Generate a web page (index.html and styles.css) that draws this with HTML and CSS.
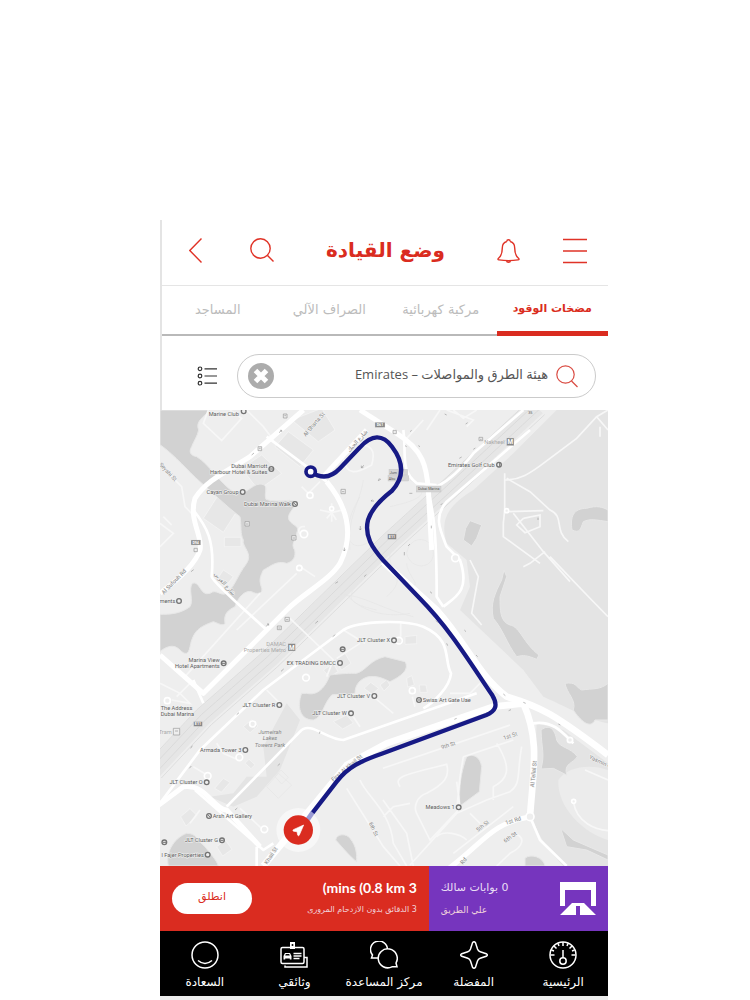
FILE: index.html
```html
<!DOCTYPE html>
<html lang="ar" dir="rtl">
<head>
<meta charset="utf-8">
<meta name="viewport" content="width=device-width, initial-scale=1">
<title>وضع القيادة</title>
<link rel="stylesheet" href="styles.css">
</head>
<body>
<div class="app">
  <div class="top">
    <header class="header">
      <div class="actions actions-start">
        <button class="icon-button" aria-label="القائمة"><svg width="24" height="26" viewBox="0 0 24 26"><path d="M0 1.5h24M0 13h24M0 24.5h24"/></svg></button>
        <button class="icon-button" aria-label="التنبيهات"><svg width="23" height="26" viewBox="0 0 23 26"><path d="M9.8 3.5C6.800 4.200 5.300 6.800 5.300 10C5.300 16 4 18.300 1.500 20.300C.6 21.100.8 21.700 2 21.900C8 22.800 15 22.800 21 21.900C22.200 21.700 22.400 21.100 21.500 20.300C19 18.300 17.700 16 17.700 10C17.700 6.800 16.200 4.200 13.200 3.500M9.800 3.500a1.700 1.700 0 1 1 3.400 0M9.300 22.800a2.300 2 0 0 0 4.400 0"/></svg></button>
      </div>
      <h1 class="title">وضع القيادة</h1>
      <div class="actions actions-end">
        <button class="icon-button" aria-label="بحث"><svg width="24" height="25" viewBox="0 0 24 25"><circle cx="10.500" cy="10.500" r="9.700"/><path d="M17.500 17.500l6 6"/></svg></button>
        <button class="icon-button" aria-label="رجوع"><svg width="13" height="25" viewBox="0 0 13 25"><path d="M12.500.5L.8 12.500l11.700 12"/></svg></button>
      </div>
    </header>
    <nav class="tabs">
      <button class="tab tab-active">مضخات الوقود</button>
      <button class="tab">مركبة كهربائية</button>
      <button class="tab">الصراف الآلي</button>
      <button class="tab">المساجد</button>
    </nav>
    <form class="search">
      <div class="field">
        <svg class="field-icon" width="22" height="23" viewBox="0 0 22 23"><circle cx="9.500" cy="9.500" r="8.700"/><path d="M15.500 16l6 6"/></svg>
        <input class="field-input" type="text" aria-label="بحث عن موقع" value="هيئة الطرق والمواصلات – Emirates">
        <button class="clear" type="button" aria-label="مسح"><svg width="26" height="26" viewBox="0 0 26 26"><circle cx="13" cy="13" r="13"/><path d="M7.500 7.500l11 11M18.500 7.500l-11 11"/></svg></button>
      </div>
      <button class="list" type="button" aria-label="عرض القائمة"><svg width="20" height="20" viewBox="0 0 20 20"><g><circle cx="3" cy="2.800" r="1.800"/><circle cx="3" cy="10" r="1.800"/><circle cx="3" cy="17.200" r="1.800"/></g><path d="M7.500 2.800H20M7.500 10H20M7.500 17.200H20"/></svg></button>
    </form>
  </div>

  <main class="map">
    <svg class="map-canvas" viewBox="0 0 1344 1368" preserveAspectRatio="xMidYMid slice" direction="ltr" role="img" aria-label="خريطة المسار">
      <rect width="1344" height="1368" fill="#eee"/>
      <g class="park">
        <path d="M1190 0H1344V940C1290 930 1240 900 1150 860L1090 780L900 600L930 530L920 450L860 400C840 330 860 290 940 240L1060 130Z"/>
        <path d="M1130 940L1210 960L1344 1060V1368H1210C1150 1300 1110 1250 1115 1170C1135 1080 1125 1010 1130 940Z"/>
        <path d="M150 1160L220 1150L260 1100L320 1100L310 1010L380 880L420 930L400 980L360 1080L290 1160L220 1190Z"/>
      </g>
      <g class="golf">
        <path d="M1195 1110C1220 1070 1290 1060 1344 1080V1290C1270 1270 1190 1190 1195 1110Z"/>
      </g>
      <g class="blocks">
        <path d="M345 110l40-45l75 55l-40 50zM395 30l90-35l40 65l-50 35zM245 175l60-40l60 55l-70 50zM175 255l60 42l-45 70l-60-42zM193 382h50v28h-50z"/>
        <path d="M190 480l30 20l-20 25l-28-18zM525 750l30-20l18 30l-28 20zM490 780l30-20l14 25l-26 16zM612 835l20-18l24 18l-20 18zM660 825l20-16l10 16l-18 18zM520 935l40-20l20 24l-32 18zM250 950l24-20l20 18l-24 20zM190 1105l20 12l-26 30l-20-12zM255 1060l12-12l18 16l-12 12zM62 1220l28-24l22 22l-34 30zM170 1310l26-20l20 28l-28 20zM735 680l35-4v25l-35 2zM740 805l15-8l8 28l-20 6zM778 825h20l4 22h-22z"/>
      </g>
      <g class="water">
        <path d="M0 0H150C130 22 105 34 116 60C112 80 100 95 95 110C86 124 90 137 110 140C145 160 180 220 220 245C260 260 270 225 300 222C330 224 310 245 318 268C350 280 380 265 412 275C400 300 380 310 387 330C400 350 420 345 410 370C410 390 390 400 404 420C408 440 400 455 380 460C350 450 330 470 310 480C295 510 300 515 305 535C310 550 290 555 275 545C255 540 235 560 225 590C205 600 190 610 195 640C190 650 175 640 160 635C120 650 100 660 90 710C85 735 75 735 60 720C40 700 20 710 0 724V613C30 613 60 612 90 590C102 570 84 540 97 520C120 510 120 560 150 550C170 535 180 560 200 550C225 530 230 500 260 460C280 430 245 410 250 390C240 370 245 350 240 320C200 290 160 250 120 215C80 180 50 140 0 104Z"/>
        <path d="M440 850C480 860 500 820 510 795C550 790 570 790 590 790C620 780 630 750 675 740L735 755C750 780 720 800 690 815C650 795 640 800 625 800C590 810 585 835 585 850C550 860 530 850 515 855C485 890 490 920 460 930C420 930 410 890 425 850Z"/>
        <path d="M25 1368C15 1320 50 1280 80 1270C110 1270 110 1290 135 1310C150 1330 170 1350 175 1368Z"/>
        <path d="M930 332L965 345L950 385L935 408L910 390L917 355ZM1236 360C1230 320 1240 295 1280 295C1310 285 1330 292 1344 300V335C1310 330 1290 325 1270 335C1260 360 1260 370 1236 360Z"/>
        <path d="M1032 480L1040 500L1020 560C1020 600 1020 635 1050 645C1080 650 1090 700 1137 735L1130 748C1100 735 1090 735 1070 740C1040 700 1030 660 1000 625C990 580 1005 550 1025 510Z"/>
        <path d="M1215 820C1250 815 1245 830 1265 840C1300 835 1320 840 1344 820V930H1305C1290 960 1260 930 1240 900C1250 870 1220 850 1215 820Z"/>
        <path d="M920 1040C940 1030 960 1040 965 1070L958 1145L900 1188C895 1130 905 1080 920 1040ZM1143 960C1170 940 1185 960 1190 990C1200 1015 1230 1010 1252 1040C1240 1060 1210 1060 1220 1095L1180 1075L1143 1077C1155 1030 1145 1020 1143 960Z"/>
        <path d="M1202 1255L1240 1290L1344 1335V1350L1280 1320L1220 1310ZM1095 1345C1110 1330 1150 1340 1155 1368H1095ZM527 1290C530 1270 560 1270 570 1285C590 1310 590 1330 590 1355C570 1340 550 1315 527 1290Z"/>
      </g>
      <g class="rail">
        <path d="M-20 1080L130 920L330 745L520 560L695 390L860 240L1130 -10"/>
        <g class="rail-line">
          <path d="M-40 1060L110 900L310 725L500 540L675 370L840 220L1110 -30"/>
          <path d="M-26 1074L124 914L324 739L514 554L689 384L854 234L1124 -16"/>
          <path d="M-12 1088L138 928L338 753L528 568L703 398L868 248L1138 -2"/>
          <path d="M4 1104L154 944L354 769L544 584L719 414L884 264L1154 14"/>
        </g>
      </g>
      <g class="minor">
        <path d="M145 0L130 40L185 92L245 25L210 0M260 0L310 50L340 90M0 165L65 230L75 290L95 310M0 340L40 370L0 410M35 345L10 320M435 370C410 380 410 345 435 350M445 250L480 215M425 230L460 265M550 145C560 200 590 190 635 165C645 130 640 110 610 105M480 300l35 8l40-10M515 280v55M500 325l15-17l14 22M465 500L420 470M410 490L230 660M300 550L75 800M390 625L520 750L500 800M0 820L60 850L90 880L35 870M50 860L90 820M320 840L360 880M550 660L615 700M530 745L600 700M722 640V680M170 1000L190 1030L235 1050M100 1070L150 1100M240 1195L310 1260M90 1240L120 1200M740 85L790 30M860 0L940 30L920 50M880 0L910 25L950 0M800 60L840 0M1034 190V300L1030 340V380L1140 460M1060 310L1150 425L1230 515M1035 210C1080 210 1110 190 1150 160L1250 85L1310 20L1344 0M1040 205L1110 245L1170 300C1215 320 1180 360 1225 395M1040 305L1150 302M1090 325L1140 315V350L1095 368L1070 345L1090 325M1310 20L1344 60M1320 50V80M1090 470L1110 460L1155 425M1170 440L1295 570L1344 620M930 450L955 500L935 610L965 645M870 850H930L960 820M757 860L765 890M640 860L700 910M580 920L600 950"/>
        <path d="M669 1075L1050 945M720 1130C700 1100 730 1095 860 1063C870 1100 855 1120 800 1150C770 1160 760 1190 770 1210L810 1290L900 1195L890 1115M750 1180L700 1190L670 1220M750 1365L890 1210L980 1170L1050 1145C1085 1120 1070 1090 1085 1010M910 1040L900 1100L890 1200M910 1040L1060 990M1010 1000C1060 1080 1040 1110 1000 1130L1000 1170M930 1210L960 1240M830 1280C850 1260 900 1270 920 1290M880 1330L1060 1190M1060 1270C1100 1280 1090 1310 1050 1330L1010 1368M600 1110C620 1160 690 1200 700 1300L740 1368M560 1135L670 1310L720 1368M669 1170L740 1270L760 1368M1240 1175C1250 1240 1310 1260 1344 1262M1275 1080L1344 1110"/>
      </g>
      <g class="ramp">
        <path d="M610 210C600 280 560 320 570 420M620 400C560 430 540 360 600 260M540 530C600 620 700 620 750 610M640 480C540 560 560 580 650 600M680 560C750 500 680 480 690 430M690 290C780 270 820 250 750 210M740 430C750 370 820 380 820 430S750 480 740 430M520 560C590 540 640 590 760 620M700 500C820 560 740 500 740 460M320 1130l35-40l40 35l-40 40zM345 1100l18-20l22 22l-20 20z"/>
      </g>
      <g class="road">
        <path d="M100 300C140 350 165 390 155 500C160 520 300 640 320 660M130 880L100 810"/>
        <path d="M320 80L500 215M105 1140L310 1320L340 1300M290 1310V1368"/>
        <path d="M0 1180L120 1020L310 840L550 660C600 630 740 630 790 650C880 690 850 750 873 790C870 830 820 880 790 895M200 1190L420 965C450 930 500 990 550 990L950 850"/>
        <path d="M1090 0L940 130C900 180 870 210 830 230M730 60C740 140 720 180 770 220L830 225"/>
        <path d="M1110 60L860 275C820 320 840 360 860 410L900 450C930 540 890 560 850 590M800 220C820 300 830 360 830 560L850 590"/>
      </g>
      <g class="avenue">
        <path d="M430 0L270 140C200 185 140 210 105 265C85 330 130 380 120 420C110 450 80 490 0 550"/>
        <path d="M500 215C570 300 580 380 540 460C510 510 430 550 380 600L130 850L0 735"/>
        <path d="M600 0L710 70C790 120 800 170 805 240L815 420M490 200L620 60"/>
        <path d="M-10 1190L70 1130C140 1120 160 1200 200 1200L300 1310"/>
        <path d="M1110 1220C990 1240 970 1300 860 1380"/>
      </g>
      <g class="highway">
        <path d="M669 455L830 600C920 700 950 790 1040 860C1140 890 1180 910 1344 1035"/>
        <path d="M310 1368L470 1175L560 1065L680 1000L1000 890L1090 880C1140 990 1120 1080 1110 1220"/>
      </g>
      <path class="road" d="M1110 1220L1140 1290L1220 1368M1120 940C1180 930 1210 970 1240 1000"/>
      <g class="circles">
        <circle cx="450" cy="256" r="9"/><circle cx="432" cy="372" r="11"/><circle cx="418" cy="474" r="8"/><circle cx="515" cy="296" r="6"/><circle cx="438" cy="803" r="10"/><circle cx="278" cy="942" r="9"/><circle cx="238" cy="1042" r="10"/><circle cx="313" cy="1258" r="10"/><circle cx="143" cy="1098" r="10"/><circle cx="22" cy="872" r="9"/><circle cx="717" cy="692" r="10"/><circle cx="757" cy="842" r="9"/><circle cx="886" cy="444" r="11"/><circle cx="1040" cy="302" r="6"/><circle cx="1110" cy="1220" r="12"/><circle cx="1241" cy="1174" r="6"/><circle cx="1230" cy="990" r="8"/>
      </g>

      <g class="road-label">
        <text transform="translate(437 80) rotate(-49)">Al Sharta St</text>
        <text transform="translate(569 127) rotate(-48)">شارع الحبك</text>
        <text transform="translate(-4 164) rotate(47)">Seyahi St</text>
        <text transform="translate(12 554) rotate(-46)">Al Sufouh Rd</text>
        <text transform="translate(161 492) rotate(49)">شارع الغربي</text>
        <text transform="translate(520 1115) rotate(-40)">First Al Khail St</text>
        <text transform="translate(322 1364) rotate(-57)">Khail St</text>
        <text transform="translate(626 1240) rotate(64)">6th St</text>
        <text transform="translate(845 1018) rotate(-17)">9th St</text>
        <text transform="translate(1032 990) rotate(-19)">1st St</text>
        <text transform="translate(1122 1132) rotate(-84)">Al Telial St</text>
        <text transform="translate(1286 1045) rotate(25)">Yasmin 4</text>
        <text transform="translate(1038 1244) rotate(-17)">1st Rd</text>
        <text transform="translate(954 1266) rotate(-39)">5th St</text>
        <text transform="translate(1036 1299) rotate(-36)">6th St</text>
        <text transform="translate(908 1364) rotate(-48)">Rd</text>
      </g>
      <g class="place">
        <text x="146" y="19">Marine Club</text>
        <g text-anchor="end">
          <text x="322" y="173">Dubai Marriott</text><text x="322" y="192">Harbour Hotel &amp; Suites</text>
          <text x="236" y="252">Cayan Group</text><text x="393" y="288">Dubai Marina Walk</text>
          <text x="1004" y="170">Emirates Golf Club</text><text x="46" y="579">ments</text>
          <text x="179" y="757">Marina View</text><text x="179" y="775">Hotel Apartments</text>
          <text x="528" y="765">EX TRADING DMCC</text><text x="690" y="697">JLT Cluster X</text>
          <text x="630" y="863">JLT Cluster V</text><text x="560" y="916">JLT Cluster W</text><text x="346" y="890">JLT Cluster R</text>
          <text x="244" y="1026">Armada Tower 3</text><text x="128" y="1123">JLT Cluster O</text>
          <text x="174" y="1297">JLT Cluster G</text><text x="132" y="1340">l Fajer Properties</text><text x="884" y="1198">Meadows 1</text>
        </g>
        <text x="2" y="899">The Address</text><text x="2" y="918">Dubai Marina</text>
        <text x="788" y="875">Swiss Art Gate Uae</text><text x="158" y="1225">Arsh Art Gallery</text>
      </g>
      <g class="transit" text-anchor="end">
        <text x="378" y="709">DAMAC</text><text x="378" y="727">Properties Metro</text><text x="1034" y="101">Nakheel</text><text x="35" y="971">Tram</text>
      </g>
      <g class="park-label" text-anchor="middle"><text x="330" y="972">Jumeirah</text><text x="330" y="991">Lakes</text><text x="330" y="1010">Towers Park</text></g>
      <g class="poi">
        <circle cx="251" cy="4" r="7"/><circle cx="334" cy="177" r="7"/><circle cx="248" cy="246" r="7"/><circle cx="405" cy="282" r="7"/><circle cx="1017" cy="164" r="7"/><circle cx="57" cy="573" r="7"/><circle cx="191" cy="760" r="7"/><circle cx="540" cy="759" r="7"/><circle cx="702" cy="691" r="7"/><circle cx="643" cy="858" r="7"/><circle cx="573" cy="910" r="7"/><circle cx="358" cy="885" r="7"/><circle cx="548" cy="718" r="7"/><circle cx="256" cy="1020" r="7"/><circle cx="140" cy="1117" r="7"/><circle cx="186" cy="1291" r="7"/><circle cx="143" cy="1334" r="7"/><circle cx="896" cy="1192" r="7"/><circle cx="777" cy="870" r="7"/><circle cx="147" cy="1218" r="7"/><circle cx="13" cy="1297" r="7"/>
        <path class="poi-bar" d="M329 177h10M186 760h10M543 718h10M181 1291h10M8 1297h10M1019 159v10M774 870h7M401 279l8 7M144 1214l6 8"/>
      </g>
      <g class="stops">
        <path d="M370 12h11v12h-11zM294 110h11v12h-11zM543 238h13v13h-13zM255 335h13v13h-13zM395 377h13v13h-13zM102 415h10v10h-10zM375 622h13v12h-13zM352 648h12v11h-12zM699 61h10v10h-10zM957 82h11v10h-11zM40 955h19v20h-19z"/>
        <path class="stops-dot" d="M373 17h5M297 115h5M546 245h7M258 342h7M398 384h7M378 629h7M355 654h6M960 88h5M45 963h9"/>
      </g>
      <g class="arrows"><path d="M357 68l8-7m-5 0h5v5M275 135l7-6M604 173l8-7m-8 7v-6m0 6h6M655 212l8-5m-8 5l3-7M633 273h9m-9 0l4-4M601 348v12m-3-4l3 4l3-4M553 413v10m-3-4l3 4l3-4M93 485l8-6M319 648l7-6m-5 0h5v5M526 520l8-5M612 500l7-6M466 640l8-7M518 680l8-6M363 784l8-7M230 914l7-6M92 1015l5-8M88 1075l6-7M353 1067l7-6M225 1200l7-6M480 965l-2 6M750 65l5-4M860 15l-6-3M917 42l6-4M940 118l6-4M898 145l7-4M780 110l-5-3M740 110l-5-3M748 250h9M842 285l5-5M814 347v8M744 408l6-6M733 426v10M1134 323v7M810 545l6 5M828 632l6 6M860 700l3 7M913 660l5 5M948 735l5 5M1030 852l6 5M1090 877l7 3M1046 902l7-3M883 928l7-3M1195 942l6 3"/></g>
      <g class="shields">
        <rect x="645" y="37" width="30" height="15"/><rect x="93" y="390" width="29" height="15"/><rect x="683" y="372" width="26" height="16"/><rect x="101" y="935" width="26" height="14"/><rect x="384" y="701" width="22" height="22"/><rect x="1040" y="84" width="22" height="23"/>
        <g><text x="660" y="49">D61</text><text x="107" y="402">D94</text><text x="696" y="385">E11</text><text x="114" y="946">E11</text><text class="metro" x="395" y="719">M</text><text class="metro" x="1051" y="102">M</text></g>
      </g>
      <g class="signs"><rect x="769" y="228" width="74" height="18"/><rect x="687" y="178" width="56" height="17"/><rect x="684" y="197" width="62" height="16"/><text x="806" y="241">Dubai Marina</text><text x="700" y="191">Jum</text><text x="696" y="209">Abu</text><text x="1111" y="12">35</text></g>

      <circle cx="415" cy="1260" r="66" fill="#fff" opacity=".5"/>
      <path d="M458 1207L435 1240" stroke="#9a9bd4" stroke-width="14"/>
      <path class="route" d="M452 185C485 208 515 202 540 175L600 112C635 73 668 72 696 110C734 160 730 205 696 242C665 266 635 295 624 330C612 378 638 415 669 450L779 565C870 658 925 750 997 856C1016 888 1005 904 979 915L669 1030C600 1054 565 1070 530 1115L458 1208"/>
      <circle class="route-start" cx="452" cy="185" r="14"/>
      <circle cx="415" cy="1260" r="44" fill="#da2c20"/>
      <path d="M431 1245L400 1259C398 1261 399 1264 402 1264L411 1265L413 1275C414 1278 417 1278 418 1275Z" fill="#fff" stroke="#fff" stroke-width="2"/>
    </svg>
  </main>

  <section class="summary">
    <div class="gates">
      <svg class="gate-icon" width="36" height="33" viewBox="0 0 36 33"><path d="M0 0h36v24h-5V8H5v16H0zM12 21h12l12 12H20v-9h-4v9H0z"/></svg>
      <div class="gates-text"><p class="gates-count">0 بوابات سالك</p><p class="note">علي الطريق</p></div>
    </div>
    <div class="trip">
      <div class="trip-text"><p class="trip-time" dir="ltr">(mins (0.8 km 3</p><p class="note note-small">3 الدقائق بدون الازدحام المرورى</p></div>
      <button class="go">انطلق</button>
    </div>
  </section>

  <nav class="bottom">
    <a class="item" href="#"><svg width="28" height="28" viewBox="0 0 28 28"><circle cx="14" cy="14" r="13"/><circle cx="14" cy="20" r="3.200"/><path d="M14 16.800V9M14 1v4M1.500 14h4M22.500 14h4M5 5l2.500 2.500M23 5l-2.500 2.500M9 2.500l1 2.500M19 2.500L18 5M2.500 9L5 10M25.500 9L23 10"/></svg><span>الرئيسية</span></a>
    <a class="item" href="#"><svg width="28" height="28" viewBox="0 0 28 28"><path d="M12.500 1.800q1.500-2 3 0l2 6.200q.7 2 2.700 2.700l6 2q2.200 1.300 0 2.600l-6 2q-2 .7-2.700 2.700l-2 6.200q-1.500 2-3 0l-2-6.200q-.7-2-2.700-2.700l-6-2q-2.200-1.300 0-2.600l6-2q2-.7 2.700-2.700z"/></svg><span>المفضلة</span></a>
    <a class="item" href="#"><svg width="28" height="28" viewBox="0 0 28 28"><path d="M17.500 8.500A8.500 8.500 0 1 0 2.500 14L1.500 17h7M26 22a9.500 9.500 0 1 0-4 3.800h5z"/></svg><span>مركز المساعدة</span></a>
    <a class="item" href="#"><svg width="28" height="28" viewBox="0 0 28 28"><rect x="1" y="6.500" width="23" height="16" rx="1.500"/><path d="M24 16.500h3V26H5v-1.500M13.500 12.500h8M13.500 15h8M13.500 17.500h6"/><path class="solid" d="M10 1h5v7h-5zM5 12h5l1.500 3v3.500H9.800V17.500H5.200v1H3.500V15z"/><circle class="hole" cx="12.500" cy="4" r="1"/><path class="hole" d="M5.800 13h3.400l.6 1.500H5.200z"/></svg><span>وثائقي</span></a>
    <a class="item" href="#"><svg width="28" height="28" viewBox="0 0 28 28"><circle cx="14" cy="14" r="13"/><path d="M7 19.500q7 6 14 0"/></svg><span>السعادة</span></a>
  </nav>
</div>
</body>
</html>
```
FILE: styles.css
```css
* { box-sizing: border-box; }
body { margin: 0; min-height: 100vh; padding: 220px 142px 0 160px; background: #fff; font-family: "DejaVu Sans", sans-serif; }
p, h1 { margin: 0; }
button, input { font: inherit; border: 0; padding: 0; margin: 0; background: none; }
svg { display: block; }
.app { min-height: 780px; background: #ececec; }
.top { background: #fff; border-left: 2px solid #e4e4e4; }
.header { display: flex; align-items: center; height: 66px; padding: 0 21px 4px 27px; border-bottom: 1px solid #e5e5e5; }
.actions { display: flex; align-items: center; }
.actions-start { gap: 43px; }
.actions-end { gap: 48px; }
.icon-button svg { fill: none; stroke: #e03327; stroke-width: 1.4; }
.title { flex: 1; text-align: center; color: #da2c20; font-size: 20px; line-height: 28px; padding-bottom: 2px; }
.tabs { display: grid; grid-template-columns: repeat(4, 1fr); height: 50px; }
.tab { padding-bottom: 2px; color: #bcbcbc; font-size: 13px; border-bottom: 2px solid #b9b9b9; white-space: nowrap; }
.tab-active { padding-bottom: 0; color: #da2c20; font-weight: bold; font-size: 11px; border-bottom: 5px solid #da2c20; }
.search { display: flex; align-items: center; gap: 20px; height: 74px; padding: 6px 12px 0 35px; }
.field { flex: 1; display: flex; align-items: center; gap: 8px; min-width: 0; height: 44px; padding: 0 17px 0 10px; border: 1px solid #cbcbcb; border-radius: 22px; }
.field-icon { fill: none; stroke: #da4b42; stroke-width: 1.2; }
.field-input { flex: 1; min-width: 0; height: 32px; padding-bottom: 4px; color: #555; font-family: "Open Sans", "DejaVu Sans", sans-serif; font-size: 13px; }
.clear circle { fill: #acacac; }
.clear path { stroke: #fff; stroke-width: 5; }
.list svg { fill: none; stroke: #333; stroke-width: 1.2; }

.map { height: 456px; overflow: hidden; }
.map-canvas { width: 100%; height: 100%; font-family: Roboto, "DejaVu Sans", sans-serif; font-size: 17px; fill: none; }
.park { fill: #e4e4e4; }
.golf { fill: #ececec; }
.blocks { fill: #e7e7e7; stroke: #f6f6f6; stroke-width: 2; }
.water { fill: #d2d2d2; stroke: #e8e8e8; stroke-width: 3; }
.rail { stroke: #e6e6e6; stroke-width: 54; }
.rail-line { stroke: #d5d5d5; stroke-width: 2; }
.minor { stroke: #f7f7f7; stroke-width: 5; }
.ramp { stroke: #e6e6e6; stroke-width: 2; }
.road { stroke: #fff; stroke-width: 8; stroke-linejoin: round; }
.avenue { stroke: #fff; stroke-width: 15; stroke-linejoin: round; }
.highway { stroke: #fff; stroke-width: 20; stroke-linejoin: round; }
.circles { fill: #eee; stroke: #fff; stroke-width: 5; }
.road-label { fill: #858585; stroke: #f5f5f5; stroke-width: 3; paint-order: stroke; }
.place { fill: #5c5c5c; stroke: #f3f3f3; stroke-width: 3; paint-order: stroke; }
.transit { fill: #aaa; }
.park-label { fill: #858585; font-style: italic; }
.poi { fill: #eee; stroke: #747474; stroke-width: 4; }
.poi-bar { stroke-width: 3; }
.stops { fill: #eee; stroke: #999; stroke-width: 2; }
.arrows { stroke: #999; stroke-width: 2; }
.shields { fill: #888; stroke: #ddd; stroke-width: 1; }
.shields text { fill: #fff; stroke: none; font-size: 11px; font-weight: bold; text-anchor: middle; }
.shields .metro { font-size: 19px; }
.signs { fill: #d5d5d5; stroke: #bbb; stroke-width: 1; }
.signs text { fill: #555; stroke: none; font-size: 11px; text-anchor: middle; }
.route { stroke: #171a85; stroke-width: 13; stroke-linejoin: round; }
.route-start { fill: #fff; stroke: #171a85; stroke-width: 11; }

.summary { display: grid; grid-template-columns: 2fr 3fr; height: 65px; color: #fff; }
.gates { display: flex; align-items: center; justify-content: space-between; padding: 0 12px; background: #7635be; }
.gate-icon { fill: #fff; }
.gates-text { text-align: left; }
.gates-count { font-size: 11px; line-height: 20px; color: #eadff5; }
.note { margin-top: 2px; font-size: 9px; line-height: 20px; color: #f1d4dc; white-space: nowrap; }
.note-small { font-size: 8px; }
.trip { display: flex; align-items: center; justify-content: space-between; padding: 0 12px; background: #da2c20; }
.trip-time { font-family: Lato, sans-serif; font-size: 14px; font-weight: bold; line-height: 20px; text-align: right; }
.go { width: 80px; height: 31px; padding-bottom: 4px; border-radius: 16px; background: #fff; color: #da2c20; font-size: 11px; }
.bottom { display: grid; grid-template-columns: repeat(5, 1fr); height: 65px; padding-top: 10px; background: #000; }
.item { display: flex; flex-direction: column; align-items: center; gap: 3px; color: #fff; font-size: 12px; line-height: 20px; text-decoration: none; white-space: nowrap; }
.item svg { fill: none; stroke: #fff; stroke-width: 1.5; }
.item .solid { fill: #fff; stroke: none; }
.item .hole { fill: #000; stroke: none; }
```
